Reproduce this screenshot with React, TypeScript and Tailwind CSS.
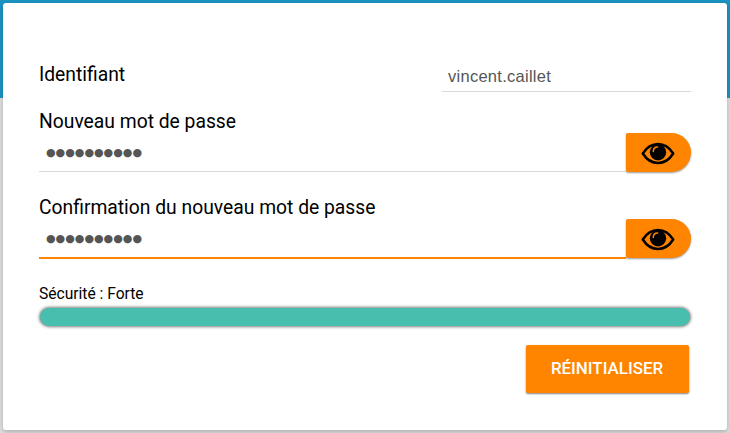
function EyeIcon() {
  return (
    <svg className="mr-[2px]" width="34" height="24" viewBox="0 0 34 24" fill="none">
      <path d="M1.800 12.500C6 5.800 11.300 3 17 3S28 5.800 32.200 12.500C28 19.200 22.700 22 17 22S6 19.200 1.800 12.500Z" stroke="#000" strokeWidth="2.5" strokeLinejoin="round" />
      <circle cx="17" cy="11.200" r="8.200" fill="#000" />
      <path d="M12.300 10.400C12.300 7.700 14 6 16.600 6" stroke="#ff8500" strokeWidth="1.500" strokeLinecap="round" />
    </svg>
  );
}

function PasswordField({ label, active = false }: { label: string; active?: boolean }) {
  return (
    <div className="h-[86px]">
      <div className="h-[24px] text-[19.3px] leading-[26px] whitespace-nowrap">{label}</div>
      <div className="flex h-[39px]">
        <div
          className={
            active
              ? "h-[40px] flex-1 border-b-2 border-[#ff8500] pl-[7px]"
              : "h-[39px] flex-1 border-b border-[#d9d9d9] pl-[7px]"
          }
        >
          <span className="block font-['DejaVu_Sans',sans-serif] text-[11px] leading-[39px] text-[#555]">●●●●●●●●●●</span>
        </div>
        <button className="flex h-[39px] w-[65px] items-center justify-center rounded-l-[2px] rounded-r-[20px] bg-[#ff8500] shadow-[0_1px_2px_rgba(0,0,0,0.4)]">
          <EyeIcon />
        </button>
      </div>
    </div>
  );
}

export default function App() {
  return (
    <div className="h-[433px] w-[730px] overflow-hidden bg-[linear-gradient(#1c93c3_98px,#dedede_98px)] p-[3px] font-[Roboto,sans-serif] text-black">
      <main className="h-[427px] w-[724px] rounded-[3px] bg-white px-9 pt-[58px] shadow-[0_2px_5px_rgba(0,0,0,0.22)]">
        <div className="flex h-[48px] justify-between">
          <div className="text-[19.3px] leading-[27px]">Identifiant</div>
          <div className="h-[31px] w-[249px] border-b border-[#d9d9d9] pl-[6px] font-['Liberation_Sans',sans-serif] text-[16.5px] leading-[30px] tracking-[0.27px] text-[#555]">vincent.caillet</div>
        </div>
        <PasswordField label="Nouveau mot de passe" />
        <PasswordField label="Confirmation du nouveau mot de passe" active />
        <div className="h-[27px] pt-[3px] text-[15.6px] leading-[20px]">Sécurité : Forte</div>
        <div className="mx-px h-[18px] rounded-full bg-[#48beae] shadow-[0_0_3px_1px_rgba(0,0,0,0.5)]" />
        <div className="flex justify-end pt-[19px] pr-[2px]">
          <button className="h-[48px] w-[163px] rounded-[2px] bg-[#ff8500] pr-px pb-px text-[16.9px] font-medium text-white shadow-[0_1px_2px_rgba(0,0,0,0.5)]">RÉINITIALISER</button>
        </div>
      </main>
    </div>
  );
}
